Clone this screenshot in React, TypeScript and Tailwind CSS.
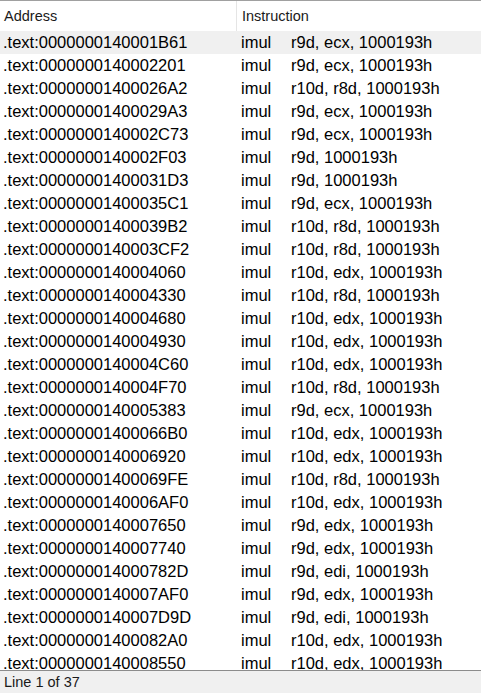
const rows: [string, string][] = [
  ['0000000140001B61', 'r9d, ecx, 1000193h'],
  ['0000000140002201', 'r9d, ecx, 1000193h'],
  ['00000001400026A2', 'r10d, r8d, 1000193h'],
  ['00000001400029A3', 'r9d, ecx, 1000193h'],
  ['0000000140002C73', 'r9d, ecx, 1000193h'],
  ['0000000140002F03', 'r9d, 1000193h'],
  ['00000001400031D3', 'r9d, 1000193h'],
  ['00000001400035C1', 'r9d, ecx, 1000193h'],
  ['00000001400039B2', 'r10d, r8d, 1000193h'],
  ['0000000140003CF2', 'r10d, r8d, 1000193h'],
  ['0000000140004060', 'r10d, edx, 1000193h'],
  ['0000000140004330', 'r10d, r8d, 1000193h'],
  ['0000000140004680', 'r10d, edx, 1000193h'],
  ['0000000140004930', 'r10d, edx, 1000193h'],
  ['0000000140004C60', 'r10d, edx, 1000193h'],
  ['0000000140004F70', 'r10d, r8d, 1000193h'],
  ['0000000140005383', 'r9d, ecx, 1000193h'],
  ['00000001400066B0', 'r10d, edx, 1000193h'],
  ['0000000140006920', 'r10d, edx, 1000193h'],
  ['00000001400069FE', 'r10d, r8d, 1000193h'],
  ['0000000140006AF0', 'r10d, edx, 1000193h'],
  ['0000000140007650', 'r9d, edx, 1000193h'],
  ['0000000140007740', 'r9d, edx, 1000193h'],
  ['000000014000782D', 'r9d, edi, 1000193h'],
  ['0000000140007AF0', 'r9d, edx, 1000193h'],
  ['0000000140007D9D', 'r9d, edi, 1000193h'],
  ['00000001400082A0', 'r10d, edx, 1000193h'],
  ['0000000140008550', 'r10d, edx, 1000193h'],
];

export default function App() {
  return (
    <div className="w-[481px] h-[693px] flex flex-col bg-white text-black overflow-hidden font-['Liberation_Sans',Arial,sans-serif]">
      {/* Column header */}
      <div className="h-[31px] shrink-0 flex border-t border-[#a0a0a0] text-[14.5px] text-[#1a1a1a]">
        <div className="w-[237px] shrink-0 pl-[4px] pt-[1px] flex items-center border-r border-[#e5e5e5]">Address</div>
        <div className="flex-1 pl-[5px] pt-[1px] flex items-center">Instruction</div>
      </div>

      {/* Rows */}
      <div className="flex-1 overflow-hidden">
        {rows.map(([addr, ops], i) => (
          <div
            key={addr}
            className={`h-[23px] flex items-center text-[16.5px] leading-none ${i === 0 ? 'bg-[#f0f0f0]' : ''}`}
          >
            <span className="w-[241px] shrink-0 pl-[3px] whitespace-nowrap">.text:{addr}</span>
            <span className="w-[50px] shrink-0">imul</span>
            <span className="whitespace-nowrap">{ops}</span>
          </div>
        ))}
      </div>

      {/* Status bar */}
      <div className="h-[23px] shrink-0 flex items-center pl-[4px] pt-[2px] bg-[#f0f0f0] border-t border-[#8c8c8c] text-[14.5px] text-[#1a1a1a]">
        Line 1 of 37
      </div>
    </div>
  );
}
